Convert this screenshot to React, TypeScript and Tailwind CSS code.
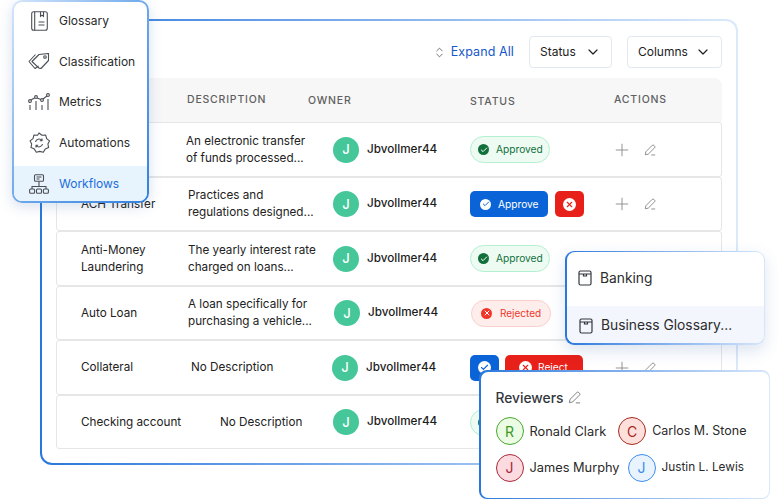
import React from "react";
import { Check, ChevronDown, ChevronsUpDown, Plus, X } from "lucide-react";

const FONT = "font-['Inter','Liberation_Sans',sans-serif]";

// ── Icons ───────────────────────────────────────────────────────────────────
const BookIcon = () => (
  <svg width="17" height="20" viewBox="0 0 17 20" fill="none" stroke="#4b4f55" strokeWidth="1.1">
    <rect x="0.700" y="0.700" width="15.600" height="18.600" rx="2" />
    <path d="M3.700 0.700v18.600M9.500 0.700v4.600l1.500-1.200 1.500 1.200V0.700M7.500 11h6M7.500 14h6" />
  </svg>
);
const TagIcon = () => (
  <svg width="22" height="17" viewBox="0 0 22 17" fill="none" stroke="#4b4f55" strokeWidth="1.1" strokeLinejoin="round">
    <path d="M4 8.500 11 1.500l9.500-1v7l-7.500 8-2-.4z" />
    <path d="M7.500 1.500 1 8.500l6 7 3.500-2.500" />
    <circle cx="17" cy="4" r="1.300" />
  </svg>
);
const MetricsIcon = () => (
  <svg width="22" height="18" viewBox="0 0 22 18" fill="none" stroke="#4b4f55" strokeWidth="1.100">
    <circle cx="2" cy="8" r="1.400" />
    <circle cx="8" cy="4" r="1.400" />
    <circle cx="14" cy="7" r="1.400" />
    <circle cx="20" cy="2" r="1.400" />
    <path d="M3 7l3.800-2.300M9.200 5l3.600 1.400M15 6l4-3M2 12v5M8 8v9M14 12v5M20 6v11" />
  </svg>
);
const GearSyncIcon = () => (
  <svg width="22" height="22" viewBox="0 0 22 22" fill="none" stroke="#4b4f55" strokeWidth="1.100" strokeLinejoin="round">
    <path d="M11 1l3 2.300 3.700-.2.900 3.500 2.900 2.300L19.900 12l.7 3.600-3.400 1.500-1.900 3.100-3.600-.8-3.400.8-1.900-3.100-3.400-1.500.7-3.600-1.600-3.100 2.900-2.300.9-3.500 3.700.2z" />
    <path d="M7.500 10a3.600 3.600 0 0 1 6.400-1.500M14.500 12a3.600 3.600 0 0 1-6.400 1.500M14 6.500v2.200h-2.200M8 15.500v-2.200h2.200" />
  </svg>
);
const FlowIcon = () => (
  <svg width="20" height="20" viewBox="0 0 20 20" fill="none" stroke="#4b4f55" strokeWidth="1.100">
    <rect x="5.500" y="0.700" width="9" height="6.500" rx="1" />
    <path d="M7.500 3h5M7.500 5h3M10 7.200v5.300M3 15v-2.500h14V15" />
    <rect x="0.600" y="15" width="5" height="4.300" rx="1" />
    <rect x="7.500" y="15" width="5" height="4.300" rx="1" />
    <rect x="14.400" y="15" width="5" height="4.300" rx="1" />
  </svg>
);
const ArchiveIcon = () => (
  <svg width="14" height="16" viewBox="0 0 14 16" fill="none" stroke="#33373d" strokeWidth="1.200">
    <rect x="1" y="1" width="12" height="14" rx="1.500" />
    <path d="M1 4h12M5.500 4v2h3V4" />
  </svg>
);
// pen with the short underline on the right, same in the table and on Reviewers
const PenIcon = ({ size = 12, color = "#808080" }: { size?: number; color?: string }) => (
  <svg width={size} height={size} viewBox="0 0 14 14" fill="none" stroke={color} strokeWidth="1" strokeLinejoin="round">
    <path d="M1.500 12.500l.6-3.400L9.600 1.600a1.300 1.300 0 0 1 1.900 0l.9.900a1.300 1.300 0 0 1 0 1.900L4.900 11.900z" />
    <path d="M8.500 12.800h4.500" />
  </svg>
);

const menu = [
  { label: "Glossary", icon: <BookIcon /> },
  { label: "Classification", icon: <TagIcon /> },
  { label: "Metrics", icon: <MetricsIcon /> },
  { label: "Automations", icon: <GearSyncIcon /> },
];

// ── Status cells ────────────────────────────────────────────────────────────
function Approved() {
  return (
    <div className="flex h-[27px] w-[80px] items-center gap-[7px] rounded-full border border-[#b3f0d0] bg-[#edfbf3] pl-[7px] text-[10.200px] text-[#12703b]">
      <span className="flex size-[11px] items-center justify-center rounded-full bg-[#12703b] text-white">
        <Check size={8} strokeWidth={3} />
      </span>
      Approved
    </div>
  );
}
function Rejected() {
  return (
    <div className="ml-px flex h-[27px] w-[80px] items-center gap-[8px] rounded-full border border-[#f9cfcb] bg-[#fdeeec] pl-[9px] text-[10px] text-[#f0362b]">
      <span className="flex size-[11px] items-center justify-center rounded-full bg-[#f0362b] text-white">
        <X size={8} strokeWidth={3} />
      </span>
      Rejected
    </div>
  );
}
function ApproveReject() {
  return (
    <div className="flex items-center gap-[7px]">
      <div className="flex h-[26px] w-[78px] items-center gap-[7px] rounded-[5px] bg-[#0b63d8] pl-[10px] text-[10.200px] text-white">
        <span className="flex size-[11px] items-center justify-center rounded-full bg-white text-[#0b63d8]">
          <Check size={8} strokeWidth={3} />
        </span>
        Approve
      </div>
      <div className="flex h-[26px] w-[29px] items-center justify-center rounded-[5px] bg-[#e8201a]">
        <span className="flex size-[13px] items-center justify-center rounded-full bg-white text-[#e8201a]">
          <X size={9} strokeWidth={3} />
        </span>
      </div>
    </div>
  );
}
function IconReject() {
  return (
    <div className="flex items-center gap-[6px]">
      <div className="flex h-[26px] w-[29px] items-center justify-center rounded-[5px] bg-[#0b63d8]">
        <span className="flex size-[13px] items-center justify-center rounded-full bg-white text-[#0b63d8]">
          <Check size={9} strokeWidth={3} />
        </span>
      </div>
      <div className="flex h-[26px] w-[78px] items-center gap-[6px] rounded-[5px] bg-[#e8201a] pl-[14px] text-[10.200px] text-white">
        <span className="flex size-[13px] items-center justify-center rounded-full bg-white text-[#e8201a]">
          <X size={9} strokeWidth={3} />
        </span>
        Reject
      </div>
    </div>
  );
}

const rows = [
  { name: "", desc: ["An electronic transfer", "of funds processed..."], descCls: "", ownerCls: "", status: <Approved /> },
  { name: "ACH Transfer", desc: ["Practices and", "regulations designed..."], descCls: "pl-[2px]", ownerCls: "", status: <ApproveReject /> },
  { name: "Anti-Money Laundering", desc: ["The yearly interest rate", "charged on loans..."], descCls: "pl-[2px]", ownerCls: "", status: <Approved /> },
  { name: "Auto Loan", desc: ["A loan specifically for", "purchasing a vehicle..."], descCls: "pl-[2px]", ownerCls: "pl-px", status: <Rejected /> },
  { name: "Collateral", desc: ["No Description"], descCls: "pl-[5px]", ownerCls: "-ml-px", status: <IconReject /> },
  { name: "Checking account", desc: ["No Description"], descCls: "pl-[34px]", ownerCls: "", status: <Approved /> },
];

const reviewers = [
  [
    { i: "R", name: "Ronald Clark", cls: "border-[#46a82e] bg-[#ebfbe4] text-[#3c9a24]", text: "text-[12.800px]" },
    { i: "C", name: "Carlos M. Stone", cls: "border-[#a8281e] bg-[#fde0dc] text-[#a8281e]", text: "text-[12.500px]" },
  ],
  [
    { i: "J", name: "James Murphy", cls: "border-[#a8283c] bg-[#fbdbe0] text-[#a8283c]", text: "text-[12.800px]" },
    { i: "J", name: "Justin L. Lewis", cls: "border-[#3b8df0] bg-[#e9f3fe] text-[#3b8df0]", text: "text-[11.800px]" },
  ],
];

export default function App() {
  return (
    <div className={`relative h-[499px] w-[778px] overflow-hidden bg-white ${FONT}`}>
      {/* Main frame */}
      <div className="ml-[40px] mt-[19px] h-[446px] w-[698px] rounded-[12px] bg-linear-to-r from-[#2878dc] to-[#dbe9fa] p-[2px]">
        <div className="h-full rounded-[10px] bg-white px-[14px] pt-[15px]">
          {/* Toolbar */}
          <div className="flex h-[32px] items-center justify-end">
            <ChevronsUpDown size={13} className="mr-[5px] text-[#555]" strokeWidth={1.500} />
            <span className="mr-[15px] text-[12.500px] tracking-[0.1px] text-[#1557c9]">Expand All</span>
            <div className="mr-[15px] flex h-[32px] w-[83px] items-center justify-between rounded-[4px] border border-[#e3e7ef] px-[10px] text-[12px] text-[#222]">
              Status <ChevronDown size={16} strokeWidth={1.800} />
            </div>
            <div className="flex h-[32px] w-[95px] items-center justify-between rounded-[4px] border border-[#e3e7ef] px-[10px] text-[12px] text-[#222]">
              Columns <ChevronDown size={16} strokeWidth={1.800} />
            </div>
          </div>

          {/* Table */}
          <div className="mt-[10px] w-[666px]">
            <div className="grid h-[44px] grid-cols-[131px_121px_162px_144px_1fr] items-center rounded-t-[8px] bg-[#f7f7f7] text-[10.500px] font-medium tracking-[0.8px] text-[#5f5f5f]">
              <span />
              <span>DESCRIPTION</span>
              <span className="pt-[2px]">OWNER</span>
              <span className="pt-[3px]">STATUS</span>
              <span>ACTIONS</span>
            </div>
            {rows.map((r) => (
              <div
                key={r.desc[0] + r.name}
                className="grid h-[54.500px] grid-cols-[129px_147px_137px_148px_1fr] items-center rounded-[3px] border border-[#e6e6e6] pt-px text-[11.700px] text-[#222]"
              >
                <span className="pl-[24px] leading-[17px]">{r.name}</span>
                <div className={`whitespace-nowrap leading-[17px] ${r.descCls}`}>
                  {r.desc.map((d) => (
                    <div key={d}>{d}</div>
                  ))}
                </div>
                <div className={`flex items-center gap-[8px] ${r.ownerCls}`}>
                  <span className="flex size-[26px] items-center justify-center rounded-full bg-[#45c79a] text-[13px] font-medium text-white">J</span>
                  <span className="text-[11.700px] font-medium text-[#1c1c1c]">Jbvollmer44</span>
                </div>
                <div>{r.status}</div>
                <div className="-ml-[6px] flex items-center gap-[12px] text-[#808080]">
                  <Plus size={20} strokeWidth={1} />
                  <PenIcon />
                </div>
              </div>
            ))}
          </div>
        </div>
      </div>

      {/* Side menu */}
      <div className="absolute left-[12px] top-0 h-[203px] w-[137px] rounded-[10px] bg-linear-to-br from-[#d6e6fa] via-[#6ea8ea] to-[#2f80e0] p-[2px] shadow-[0_4px_14px_rgba(40,90,160,0.18)]">
        <div className="flex h-full flex-col overflow-hidden rounded-[8px] bg-white">
          {menu.map((m) => (
            <div key={m.label} className="flex h-[40.500px] items-center pb-[2px] text-[12px] text-[#2a2a2a]">
              <span className="flex w-[45px] justify-center pl-[5px]">{m.icon}</span>
              {m.label}
            </div>
          ))}
          <div className="mt-[2px] flex flex-1 items-center bg-[#e8f4fd] text-[12px] text-[#1a6ddc]">
            <span className="flex w-[45px] justify-center pl-[5px]">
              <FlowIcon />
            </span>
            Workflows
          </div>
        </div>
      </div>

      {/* Glossary popover */}
      <div className="absolute left-[565px] top-[251px] h-[94px] w-[200px] rounded-[9px] bg-linear-to-r from-[#2878dc] to-[#d8e7fa] p-[2px] pr-px pt-px shadow-[0_6px_16px_rgba(40,90,160,0.16)]">
        <div className="flex h-full flex-col overflow-hidden rounded-[8px] bg-white text-[13.800px] text-[#2c2c2c]">
          <div className="flex h-[54px] items-center gap-[8px] pb-[2px] pl-[11px]">
            <ArchiveIcon />
            Banking
          </div>
          <div className="flex flex-1 items-center gap-[8px] bg-[#f3f6fc] pl-[12px] pt-[2px]">
            <ArchiveIcon />
            Business Glossary...
          </div>
        </div>
      </div>

      {/* Reviewers popover */}
      <div className="absolute left-[479px] top-[370px] h-[129px] w-[291px] rounded-[8px] bg-linear-to-r from-[#2878dc] to-[#d8e7fa] p-[1.500px]">
        <div className="h-full rounded-[7px] bg-white pl-[15px] pt-[16px]">
          <div className="flex items-center gap-[5px] text-[13.800px] font-medium text-[#33373d]">
            Reviewers <PenIcon size={13} color="#777" />
          </div>
          <div className="mt-[9px] flex flex-col gap-[8.500px]">
            {reviewers.map((row, idx) => (
              <div key={idx} className="flex items-center">
                {row.map((p, j) => (
                  <div
                    key={p.name}
                    className={`flex items-center gap-[6px] ${j === 1 ? (idx === 0 ? "ml-[12px]" : "ml-[8px]") : ""}`}
                  >
                    <span className={`flex size-[28px] items-center justify-center rounded-full border text-[14px] ${p.cls}`}>{p.i}</span>
                    <span className={`whitespace-nowrap text-[#2a2a2a] ${p.text}`}>{p.name}</span>
                  </div>
                ))}
              </div>
            ))}
          </div>
        </div>
      </div>
    </div>
  );
}
